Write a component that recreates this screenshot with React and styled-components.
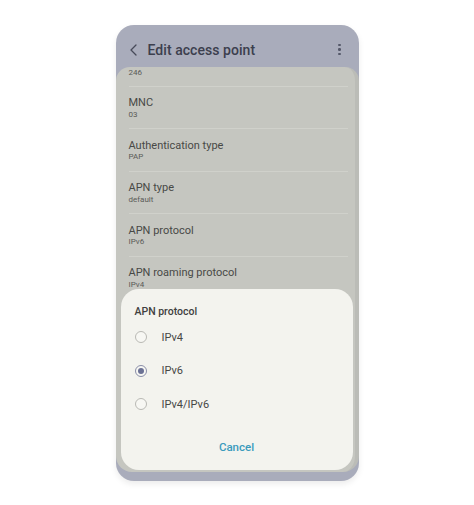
import styled, { createGlobalStyle } from 'styled-components';

const GlobalStyle = createGlobalStyle`
	body {
		margin: 0;
		background: #ffffff;
		font-family: Roboto, 'Liberation Sans', sans-serif;
	}
`;

const Page = styled.div`
	padding-top: 25px;
	height: 505px;
	box-sizing: border-box;
`;

const Phone = styled.div`
	position: relative;
	width: 243px;
	height: 456px;
	margin: 0 auto;
	display: flex;
	flex-direction: column;
	background: #a9acbb;
	border-radius: 18px;
	box-shadow: 0 3px 6px rgba(0, 0, 0, 0.08);
	padding-bottom: 9px;
	box-sizing: border-box;
	overflow: hidden;
`;

const Header = styled.div`
	height: 42px;
	flex-shrink: 0;
	display: flex;
	align-items: center;
	padding: 7px 14px 0 14px;
	box-sizing: border-box;
`;

const BackButton = styled.div`
	width: 7px;
	height: 14px;
	display: flex;
	align-items: center;
	color: #474a59;
`;

const Title = styled.div`
	flex: 1;
	margin-left: 11px;
	font-size: 14px;
	font-weight: 500;
	color: #3c3f4e;
	letter-spacing: 0.05px;
`;

const Kebab = styled.div`
	display: flex;
	flex-direction: column;
	gap: 2px;
	align-items: center;
	padding-right: 4px;
`;

const Dot = styled.span`
	width: 2.5px;
	height: 2.5px;
	border-radius: 50%;
	background: #555869;
`;

const Card = styled.div`
	position: relative;
	flex: 1;
	background: #c5c6c0;
	border-radius: 14px 14px 16px 16px;
	border-right: 4px solid #bbbcb7;
	overflow: hidden;
`;

const List = styled.div`
	display: flex;
	flex-direction: column;
	padding: 0 7px 0 13px;
`;

const Row = styled.div`
	display: flex;
	flex-direction: column;
	padding: ${(p) => (p.$partial ? '0 0 8px' : '9.5px 0 8.5px')};
	border-bottom: 1px solid #d0d1cb;
`;

const RowTitle = styled.div`
	font-size: 11px;
	line-height: 13px;
	color: #484946;
`;

const RowValue = styled.div`
	font-size: 8px;
	line-height: 10px;
	margin-top: 0.5px;
	color: #5a5b57;
`;

const Dialog = styled.div`
	position: absolute;
	left: 5px;
	right: 2px;
	bottom: 2px;
	background: #f3f3ee;
	border-radius: 18px;
	padding: 16px 14px 16px;
	display: flex;
	flex-direction: column;
`;

const DialogTitle = styled.div`
	font-size: 10.5px;
	line-height: 14px;
	font-weight: 500;
	color: #40403e;
	margin-bottom: 2px;
`;

const Option = styled.div`
	height: 33.5px;
	display: flex;
	align-items: center;
	gap: 15px;
`;

const Radio = styled.span`
	width: 12px;
	height: 12px;
	box-sizing: border-box;
	border-radius: 50%;
	border: 1px solid ${(p) => (p.$checked ? '#8a8ea8' : '#b9b9b4')};
	background: #f7f7f3;
	display: flex;
	align-items: center;
	justify-content: center;
	&::after {
		content: '';
		width: 6px;
		height: 6px;
		border-radius: 50%;
		background: ${(p) => (p.$checked ? '#6b7194' : 'transparent')};
	}
`;

const OptionLabel = styled.span`
	font-size: 11px;
	color: #474745;
`;

const CancelButton = styled.div`
	margin-top: 19px;
	text-align: center;
	font-size: 11.5px;
	line-height: 14px;
	font-weight: 500;
	color: #3a9bbd;
`;

const rows = [
	{ title: 'MNC', value: '03' },
	{ title: 'Authentication type', value: 'PAP' },
	{ title: 'APN type', value: 'default' },
	{ title: 'APN protocol', value: 'IPv6' },
	{ title: 'APN roaming protocol', value: 'IPv4' },
];

const options = ['IPv4', 'IPv6', 'IPv4/IPv6'];

const App = () => {
	return (
		<Page>
			<GlobalStyle />
			<Phone>
				<Header>
					<BackButton>
						<svg width="7" height="12" viewBox="0 0 7 12" fill="none">
							<path d="M6 1L1 6l5 5" stroke="currentColor" strokeWidth="1.3" strokeLinecap="round" strokeLinejoin="round" />
						</svg>
					</BackButton>
					<Title>Edit access point</Title>
					<Kebab>
						<Dot />
						<Dot />
						<Dot />
					</Kebab>
				</Header>
				<Card>
					<List>
						<Row $partial>
							<RowValue>246</RowValue>
						</Row>
						{rows.map((r) => (
							<Row key={r.title}>
								<RowTitle>{r.title}</RowTitle>
								<RowValue>{r.value}</RowValue>
							</Row>
						))}
					</List>
					<Dialog>
						<DialogTitle>APN protocol</DialogTitle>
						{options.map((o) => (
							<Option key={o}>
								<Radio $checked={o === 'IPv6'} />
								<OptionLabel>{o}</OptionLabel>
							</Option>
						))}
						<CancelButton>Cancel</CancelButton>
					</Dialog>
				</Card>
			</Phone>
		</Page>
	);
};

export default App;
